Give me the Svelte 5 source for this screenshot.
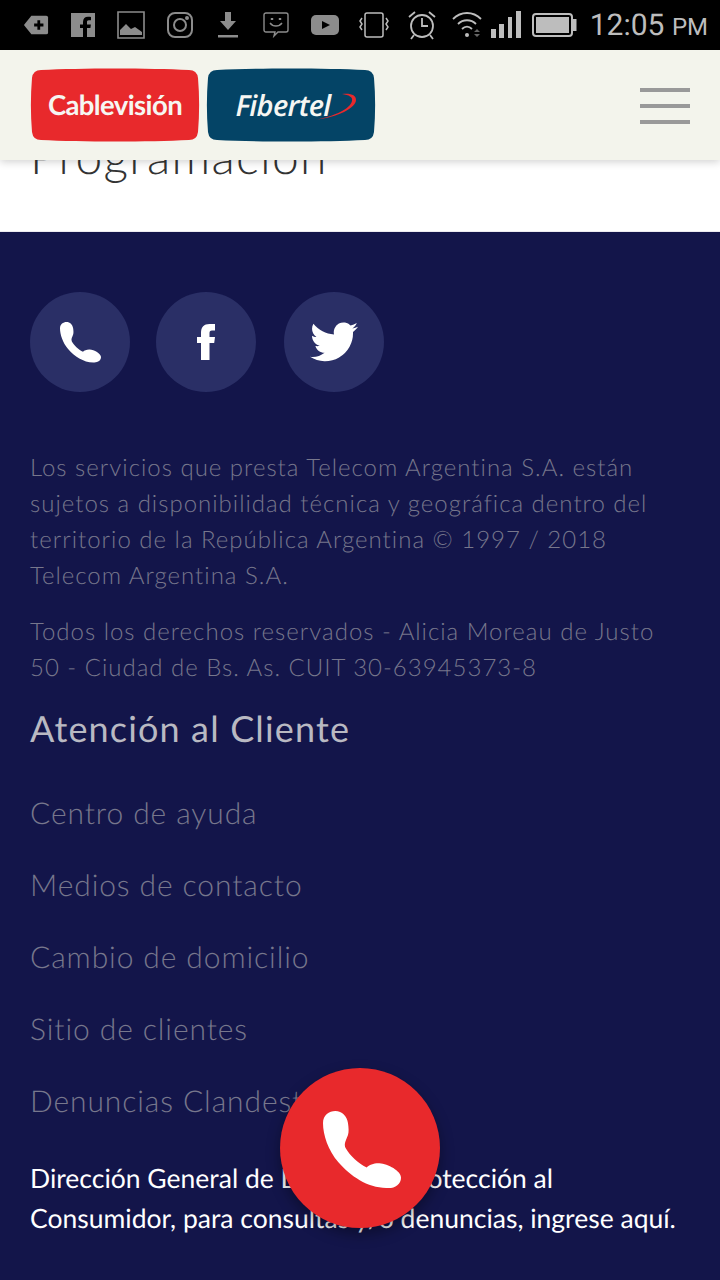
<script>
  // --- Content ---
  const links = [
    'Centro de ayuda',
    'Medios de contacto',
    'Cambio de domicilio',
    'Sitio de clientes',
    'Denuncias Clandestinas'
  ];
  const phone =
    'M0 35C0 12 18 0 36 0c20 0 34 15 37 35 2 15 3 25 0 35-5 15-13 25-7 38 12 22 39 47 62 57 7-7 22-13 37-12 25 2 63 22 63 42 0 20-20 33-43 30-55 0-105-35-140-75C15 115 0 70 0 35z';
  const badge =
    'M10 1C50-1 118-1 158 1q8 0 9 8c1.500 18 1.500 36 0 54q-1 8-9 8C118 73 50 73 10 71q-8 0-9-8C-.5 45-.5 27 1 9q1-8 9-8z';
</script>

<div class="screen">
  <!-- Android status bar -->
  <div class="status">
    <div class="notif">
      <svg width="26" height="24" viewBox="0 0 28 24"><path fill="#8c8c8c" d="M9 2h16a2 2 0 0 1 2 2v16a2 2 0 0 1-2 2H9l-8-10z"/><path stroke="#000" stroke-width="3" d="M12 12h10M17 7v10"/></svg>
      <svg width="24" height="24" viewBox="0 0 24 24"><path fill="#8c8c8c" d="M0 0h24v24h-8v-9h3.400l.5-3.600H16V9c0-1 .4-1.700 1.800-1.700H20V4c-.6-.1-1.700-.2-3-.2-3 0-5 1.800-5 5.100v2.500H9V15h3v9H0z"/></svg>
      <svg width="28" height="28" viewBox="0 0 28 28"><path fill="none" stroke="#8c8c8c" stroke-width="1.600" d="M1 1h26v26H1z"/><path fill="#8c8c8c" d="M3 24v-5l6-6 5 5 4-2 7 5v3z"/></svg>
      <svg width="26" height="26" viewBox="0 0 26 26" fill="none" stroke="#8c8c8c" stroke-width="2"><rect x="1" y="1" width="24" height="24" rx="7"/><circle cx="13" cy="13" r="6"/><circle cx="20" cy="6" r="1" fill="#8c8c8c"/></svg>
      <svg width="20" height="26" viewBox="0 0 20 26"><path fill="#8c8c8c" d="M7 0h6v9h5l-8 9-8-9h5zM0 23h20v2.400H0z"/></svg>
      <svg width="26" height="26" viewBox="0 0 26 26" fill="none" stroke="#8c8c8c" stroke-width="1.400"><path d="M3 1h20a2 2 0 0 1 2 2v15a2 2 0 0 1-2 2h-8l-4 4 1-4H3a2 2 0 0 1-2-2V3a2 2 0 0 1 2-2z"/><path d="M7 11c3 4 9 4 12 0"/><path stroke-width="2.400" d="M9 6v2M17 6v2"/></svg>
      <svg width="28" height="20" viewBox="0 0 28 20"><rect width="28" height="20" rx="5" fill="#8c8c8c"/><path fill="#000" d="M11 6l8 4-8 4z"/></svg>
    </div>
    <div class="system">
      <svg width="30" height="26" viewBox="0 0 30 26" fill="none" stroke="#bdbdbd" stroke-width="1.500"><rect x="6" y="1" width="18" height="24" rx="2"/><path d="M3 6L1 9l2 3-2 3 2 3M27 6l2 3-2 3 2 3-2 3"/></svg>
      <svg width="30" height="30" viewBox="0 0 30 30" fill="none" stroke="#bdbdbd" stroke-width="1.800"><circle cx="15" cy="16" r="11"/><path d="M15 8v8h6M2 7l6-5M28 7l-6-5M7 25l-3 4M23 25l3 4"/></svg>
      <svg width="30" height="28" viewBox="0 0 30 28" fill="none" stroke="#bdbdbd" stroke-width="1.800"><path d="M1 8c8-8 20-8 28 0M6 13c5-5 13-5 18 0M10 18c3-3 7-3 10 0"/><circle cx="15" cy="24" r="2" fill="#bdbdbd" stroke="none"/><path fill="#666" stroke="none" d="M22 21l3-3 3 3zM22 23h6l-3 3z"/></svg>
      <svg width="30" height="28" viewBox="0 0 30 28"><path fill="#bdbdbd" d="M0 18h5v9H0zM8 13h5v14H8zM17 6h4v21h-4zM25 0h5v27h-5z"/></svg>
      <svg width="45" height="24" viewBox="0 0 45 24"><rect x="1" y="1" width="39" height="22" rx="3" fill="none" stroke="#bdbdbd" stroke-width="2"/><rect x="4" y="4" width="33" height="16" fill="#bdbdbd"/><rect x="41" y="6" width="3.500" height="12" fill="#bdbdbd"/></svg>
      <div class="clock">12:05 <small>PM</small></div>
    </div>
  </div>

  <!-- Site header -->
  <header>
    <div class="logos">
      <div class="logo red">
        <svg class="shape" viewBox="0 0 168 72"><path d={badge}/></svg>
        <span>Cablevisión</span>
      </div>
      <div class="logo blue">
        <svg class="shape" viewBox="0 0 168 72"><path d={badge}/></svg>
        <span>Fibertel</span>
        <svg class="swoosh" width="44" height="28" viewBox="0 0 44 28"><path fill="#e8292c" d="M28 1c9-1 14 1 14 6 0 8-18 17-41 20 20-4 35-11 37-19 1-4-3-6-10-7z"/></svg>
      </div>
    </div>
    <div class="burger" aria-label="Menú"><i></i><i></i><i></i></div>
  </header>

  <section class="top">
    <h2>Programación</h2>
  </section>

  <footer>
    <div class="social">
      <div class="circle">
        <svg width="41" height="41" viewBox="0 0 228 228"><path fill="#fff" d={phone}/></svg>
      </div>
      <div class="circle">
        <svg width="18" height="36" viewBox="0 0 18 36"><path fill="#fff" d="M4 36V19H0v-6h4V9C4 3 7 0 12.500 0H18v6.500h-3c-2 0-2.500 1-2.500 2.700V13H18l-.8 6h-4.700v17z"/></svg>
      </div>
      <div class="circle">
        <svg width="48" height="40" viewBox="0 0 24 20"><path fill="#fff" d="M24 2.400c-.9.4-1.800.7-2.800.8 1-.6 1.800-1.600 2.200-2.700-1 .6-2 1-3.100 1.200A4.900 4.900 0 0 0 12 6.200C7.900 6 4.300 4 1.700.9c-1.300 2.200-.7 5.100 1.500 6.600-.8 0-1.600-.2-2.200-.6 0 2.400 1.700 4.500 3.900 5-.7.200-1.500.2-2.200.1.600 2 2.400 3.400 4.600 3.400A9.900 9.900 0 0 1 0 17.400 14 14 0 0 0 21.500 5c1-.7 1.800-1.600 2.500-2.600z"/></svg>
      </div>
    </div>

    <p class="legal">Los servicios que presta Telecom Argentina S.A. están sujetos a disponibilidad técnica y geográfica dentro del territorio de la República Argentina © 1997 / 2018 Telecom Argentina S.A.</p>
    <p class="legal second">Todos los derechos reservados - Alicia Moreau de Justo 50 - Ciudad de Bs. As. CUIT 30-63945373-8</p>

    <h3>Atención al Cliente</h3>
    <ul>
      {#each links as link}
        <li>{link}</li>
      {/each}
    </ul>

    <p class="defensa">Dirección General de Defensa y Protección al Consumidor, para consultas y/o denuncias, ingrese aquí.</p>
  </footer>

  <!-- Floating call button -->
  <div class="fab">
    <svg width="78" height="78" viewBox="0 0 228 228"><path fill="#fff" d={phone}/></svg>
  </div>
</div>

<style>
  :global(body) {
    margin: 0;
    background: #13154a;
  }

  .screen {
    position: relative;
    width: 720px;
    height: 1280px;
    overflow: hidden;
    font-family: Lato, "Liberation Sans", sans-serif;
    text-rendering: geometricPrecision;
  }

  /* --- Status bar --- */
  .status {
    height: 50px;
    background: #000;
    display: flex;
    align-items: center;
    justify-content: space-between;
    padding: 0 12px 0 23px;
    box-sizing: border-box;
  }

  .notif,
  .system {
    display: flex;
    align-items: center;
  }

  .notif {
    gap: 22px;
  }

  .notif svg:nth-child(5) {
    margin-left: 3px;
  }

  .notif svg:nth-child(6) {
    margin-left: 3px;
  }

  .system svg:nth-child(2) {
    margin-left: 18px;
  }

  .system svg:nth-child(3) {
    margin-left: 15px;
  }

  .system svg:nth-child(4) {
    margin-left: 9px;
  }

  .system svg:nth-child(5) {
    margin-left: 11px;
  }

  .clock {
    font-family: Roboto, sans-serif;
    font-size: 30px;
    color: #bdbdbd;
    margin-left: 13px;
  }

  .clock small {
    font-size: 24px;
  }

  /* --- Header --- */
  header {
    position: relative;
    z-index: 2;
    height: 110px;
    background: #f3f4ec;
    box-shadow: 0 2px 8px rgba(0, 0, 0, 0.18);
    display: flex;
    align-items: center;
    justify-content: space-between;
    padding: 0 30px 0 31px;
  }

  .logos {
    display: flex;
    gap: 8px;
  }

  .logo {
    position: relative;
    width: 168px;
    height: 72px;
    display: flex;
    align-items: center;
    justify-content: center;
    color: #f6f6f2;
  }

  .logo span {
    position: relative;
  }

  .shape {
    position: absolute;
    inset: 0;
    width: 100%;
    height: 100%;
    overflow: visible;
  }

  .red .shape {
    fill: #e8292c;
  }

  .blue .shape {
    fill: #044466;
  }

  .red {
    font-size: 27.5px;
    font-weight: 700;
    letter-spacing: -0.6px;
    padding-bottom: 2px;
    box-sizing: border-box;
  }

  .blue {
    font-family: "Open Sans", sans-serif;
    font-style: italic;
    font-weight: 600;
    font-size: 29px;
    letter-spacing: -0.7px;
  }

  .blue span {
    margin-right: 16px;
  }

  .swoosh {
    position: absolute;
    right: 17px;
    top: 24px;
  }

  .burger {
    width: 50px;
    display: flex;
    flex-direction: column;
    gap: 12px;
    margin-top: 2px;
  }

  .burger i {
    display: block;
    height: 4px;
    background: #999;
  }

  /* --- Page content behind the header --- */
  .top {
    display: flow-root;
    height: 71px;
    background: #fff;
    padding: 0 30px;
    border-bottom: 1px solid #eceaf0;
  }

  h2 {
    margin: -31px 0 0;
    font-weight: 300;
    font-size: 48px;
    line-height: 56px;
    color: #333;
    letter-spacing: 1.3px;
  }

  /* --- Footer --- */
  footer {
    background: #13154a;
    padding: 60px 30px 0;
    height: 1048px;
    box-sizing: border-box;
  }

  .social {
    display: flex;
    gap: 26px;
    margin-bottom: 58px;
  }

  .circle {
    width: 100px;
    height: 100px;
    border-radius: 50%;
    background: #2a2f66;
    display: flex;
    align-items: center;
    justify-content: center;
  }

  .circle:last-child {
    margin-left: 2px;
  }

  .legal {
    margin: 0 0 20px;
    max-width: 640px;
    font-weight: 300;
    font-size: 24px;
    line-height: 36px;
    letter-spacing: 1px;
    color: #77778c;
  }

  .legal.second {
    margin-bottom: 0;
  }

  h3 {
    margin: 20px 0 43px;
    font-weight: 400;
    font-size: 36px;
    line-height: 44px;
    letter-spacing: 1.15px;
    color: #b9b9c2;
  }

  ul {
    list-style: none;
    margin: 0;
    padding: 0;
  }

  li {
    font-weight: 300;
    font-size: 30px;
    line-height: 40px;
    letter-spacing: 0.9px;
    color: #77778c;
    margin-bottom: 32px;
  }

  .defensa {
    margin: 37px 0 0;
    font-size: 26.5px;
    line-height: 40px;
    color: #fff;
  }

  .fab {
    position: absolute;
    left: 280px;
    top: 1068px;
    width: 160px;
    height: 160px;
    border-radius: 50%;
    background: #e8292c;
    box-shadow: 0 6px 14px rgba(0, 0, 0, 0.35);
    display: flex;
    align-items: center;
    justify-content: center;
  }

  .fab svg {
    margin: 4px 0 0 4px;
  }
</style>
